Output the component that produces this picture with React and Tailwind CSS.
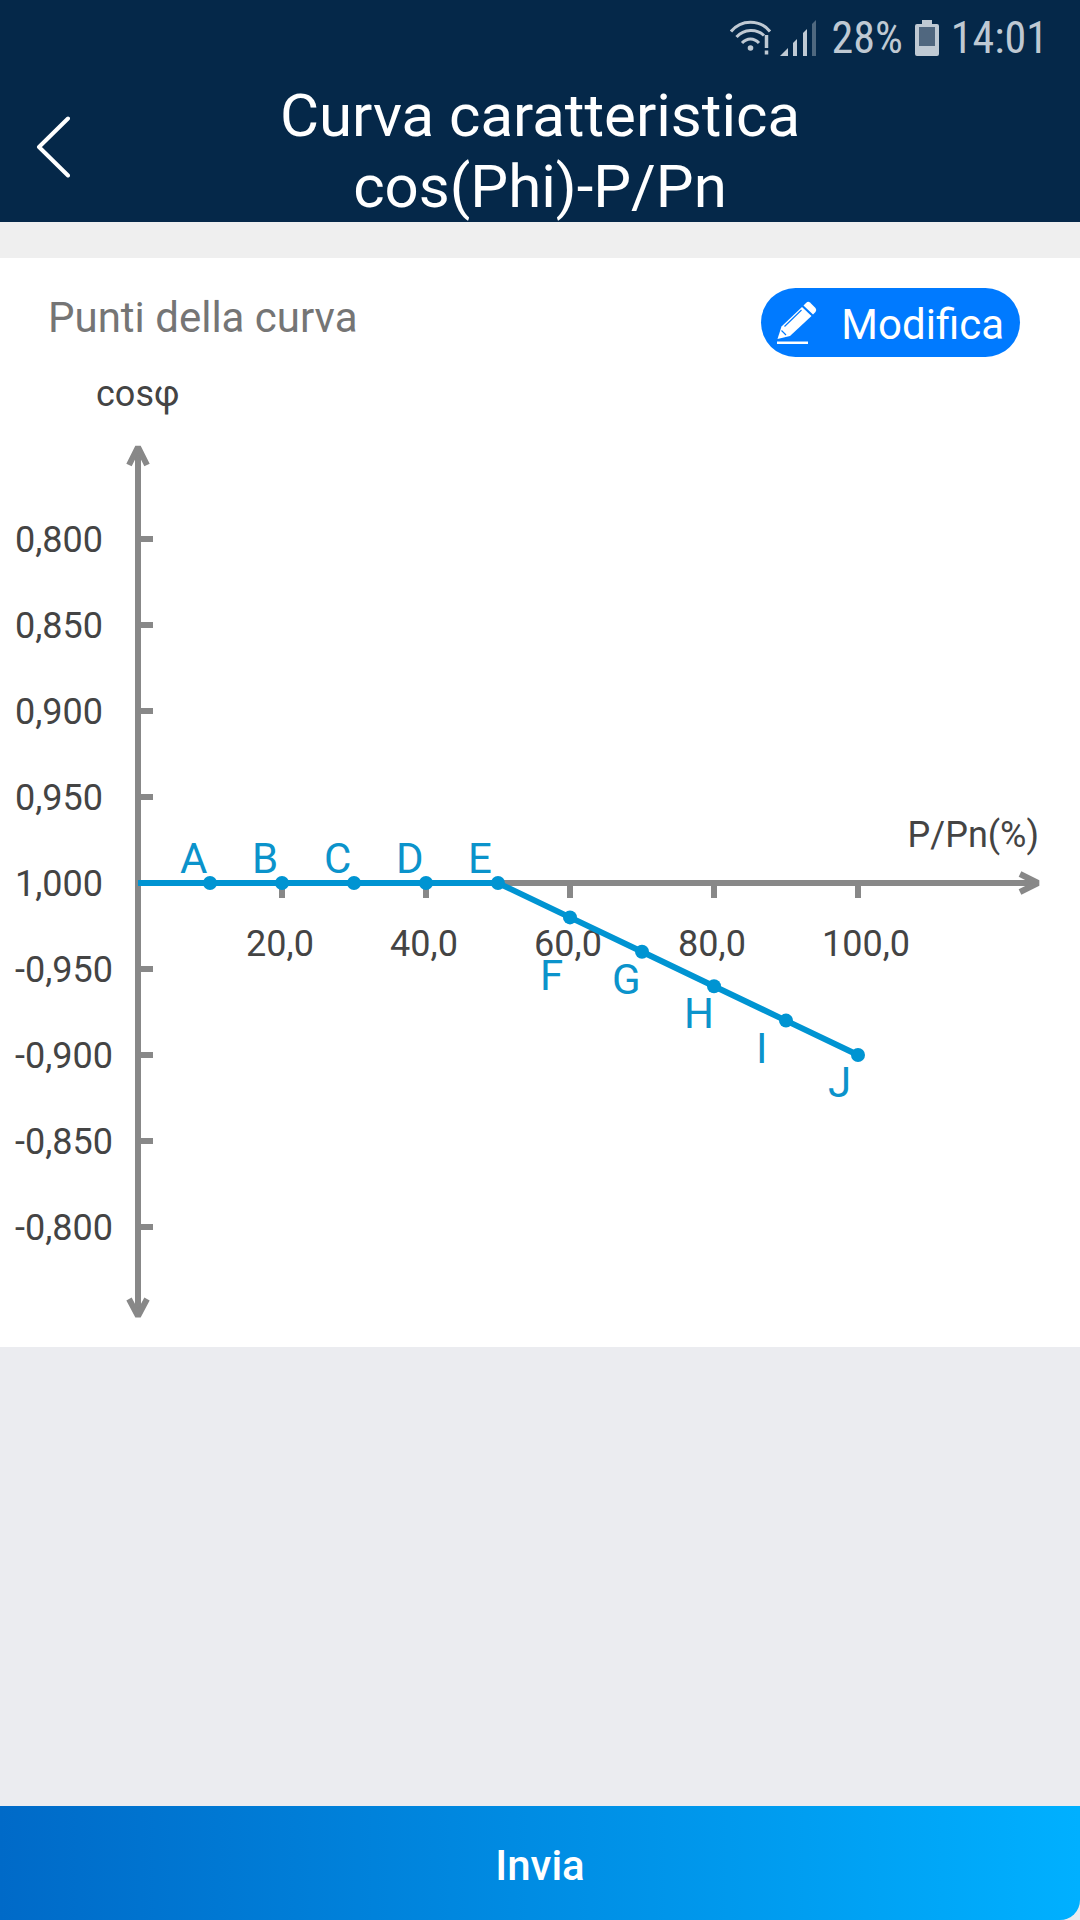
import React from "react";

const points = [
  { name: "A", p: 10, cos: 0 },
  { name: "B", p: 20, cos: 0 },
  { name: "C", p: 30, cos: 0 },
  { name: "D", p: 40, cos: 0 },
  { name: "E", p: 50, cos: 0 },
  // F goes lower, under the 60,0 tick label
  { name: "F", p: 60, cos: 0.02, drop: 73 },
  { name: "G", p: 70, cos: 0.04 },
  { name: "H", p: 80, cos: 0.06 },
  { name: "I", p: 90, cos: 0.08 },
  { name: "J", p: 100, cos: 0.1 },
];

const yLabels = [
  "0,800",
  "0,850",
  "0,900",
  "0,950",
  "1,000",
  "-0,950",
  "-0,900",
  "-0,850",
  "-0,800",
];

const xLabels = [20, 40, 60, 80, 100];

// chart origin and scale, in viewBox units
const X0 = 138;
const Y0 = 515;
const toX = (p) => X0 + p * 7.2;
const toY = (cos) => Y0 + cos * 1720;

const nameY = (pt) => {
  if (pt.cos === 0) return Y0 - 10;
  return toY(pt.cos) + (pt.drop || 42);
};

const StatusBar = () => (
  <div className="flex h-20 items-center justify-end gap-2 pb-1 pr-8 text-[#bfc9d3]">
    <svg width="42" height="36" viewBox="0 0 42 36" fill="none" stroke="currentColor">
      <path d="M1 11.500C11 -1 30 -1 40 11.500" strokeWidth="3" />
      <path d="M6.500 17C14 8.500 27 8.500 34 15.500" strokeWidth="3" />
      <path d="M12 23C17 17.500 24 17.500 29 23" strokeWidth="3" />
      <circle cx="20.500" cy="28" r="2.800" fill="currentColor" stroke="none" />
      <path d="M36.500 15v13M36.500 30.500v4" strokeWidth="3.500" />
    </svg>
    <svg width="36" height="36" viewBox="0 0 36 36" fill="currentColor">
      <path d="M0 36l8-8v8z" />
      <path d="M13 23l4-4v17h-4z" />
      <path d="M23 13l4-4v27h-4z" />
      <path d="M32 4l4-4v36h-4z" opacity="0.4" />
    </svg>
    <span className="ml-2 font-['Roboto_Condensed','Roboto',sans-serif] text-[44px] leading-[72px]">
      28%
    </span>
    <svg className="ml-1" width="24" height="36" viewBox="0 0 24 36" fill="currentColor">
      <path d="M7 0h10v4h5q2 0 2 2v28q0 2-2 2H2q-2 0-2-2V6q0-2 2-2h5z" />
      <path d="M4 7h16v19H4z" fill="#50677f" />
    </svg>
    <span className="ml-1 font-['Roboto_Condensed','Roboto',sans-serif] text-[44px] leading-[72px]">
      14:01
    </span>
  </div>
);

const Header = () => (
  <header className="bg-[#052849] text-white">
    <StatusBar />
    <div className="grid grid-cols-[108px_1fr_108px] items-center">
      <button type="button" aria-label="Indietro" className="flex h-full items-center pb-2 pl-9">
        <svg
          width="34"
          height="62"
          viewBox="0 0 34 62"
          fill="none"
          stroke="currentColor"
          strokeWidth="4"
          strokeLinecap="round"
          strokeLinejoin="round"
        >
          <path d="M32 2.500L3 31l29 28.500" />
        </svg>
      </button>
      <h1 className="text-center text-[60px] leading-[71px]">
        Curva caratteristica
        <br />
        cos(Phi)-P/Pn
      </h1>
    </div>
  </header>
);

const Chart = () => (
  <svg
    viewBox="0 0 1080 979"
    className="block w-full"
    role="img"
    aria-label="Curva cosφ-P/Pn"
  >
    <g stroke="#888888" strokeWidth="6" strokeLinejoin="bevel" fill="none">
      <path d="M138 79V948M138 515H1038" />
      <path d="M129 97L138 79L147 97" />
      <path d="M129 931L138 948L147 931" />
      <path d="M1020 506L1038 515L1020 524" />
      {yLabels.map((label, i) =>
        i === 4 ? null : <path key={label} d={`M138 ${Y0 + (i - 4) * 86}h15`} />
      )}
      {xLabels.map((x) => (
        <path key={x} d={`M${toX(x)} ${Y0}v15`} />
      ))}
    </g>

    <g fill="#444444" fontSize="36">
      <text x="96" y="38">cosφ</text>
      <text x="1039" y="479" textAnchor="end">P/Pn(%)</text>
      {yLabels.map((label, i) => (
        <text key={label} x="15" y={Y0 + 13 + (i - 4) * 86}>
          {label}
        </text>
      ))}
      {xLabels.map((x) => (
        <text key={x} x={toX(x) + (x === 100 ? 8 : -2)} y={Y0 + 73} textAnchor="middle">
          {x},0
        </text>
      ))}
    </g>

    <g fill="#0094d2">
      <polyline
        points={[`${X0},${Y0}`, ...points.map((pt) => `${toX(pt.p)},${toY(pt.cos)}`)].join(" ")}
        fill="none"
        stroke="#0094d2"
        strokeWidth="6"
      />
      {points.map((pt) => (
        <circle key={pt.name} cx={toX(pt.p)} cy={toY(pt.cos)} r="7" />
      ))}
    </g>

    <g fill="#0b93cb" fontSize="42">
      {points.map((pt) => (
        <text key={pt.name} x={toX(pt.p) - 30} y={nameY(pt)}>
          {pt.name}
        </text>
      ))}
    </g>
  </svg>
);

const App = () => {
  return (
    <div className="flex min-h-screen flex-col bg-[#ebecf0] font-['Roboto',sans-serif]">
      <Header />
      <div className="h-9 bg-[#efefef]" />
      <main className="bg-white">
        <div className="flex h-[110px] items-start justify-between pl-12 pr-[60px] pt-[30px]">
          <h2 className="text-[42px] leading-[60px] text-[#757575]">Punti della curva</h2>
          <button
            type="button"
            className="flex h-[69px] items-center gap-6 rounded-full bg-[#007aff] px-4 pt-1 text-[42px] text-white"
          >
            <svg className="mb-1" width="40" height="44" viewBox="0 0 40 44" fill="currentColor">
              <path d="M0 40.500h31v2.500H0z" />
              <path d="M29 2Q31 0 33 1.500L38.500 7Q40 9 38.500 11L36 13.500L26.500 4.500z" />
              <path d="M25 6L34.500 15L13 35L0.500 38L4.500 25.500z" />
              <path d="M24.500 9L7.500 25.500M4.500 29.500L9 34" fill="none" stroke="#007aff" strokeWidth="1.200" />
            </svg>
            Modifica
          </button>
        </div>
        <Chart />
      </main>
      <button
        type="button"
        className="mt-auto h-[114px] rounded-br-[20px] bg-linear-to-r from-[#006ac8] to-[#00b0ff] pt-1 text-[42px] font-medium text-white"
      >
        Invia
      </button>
    </div>
  );
};

export default App;
